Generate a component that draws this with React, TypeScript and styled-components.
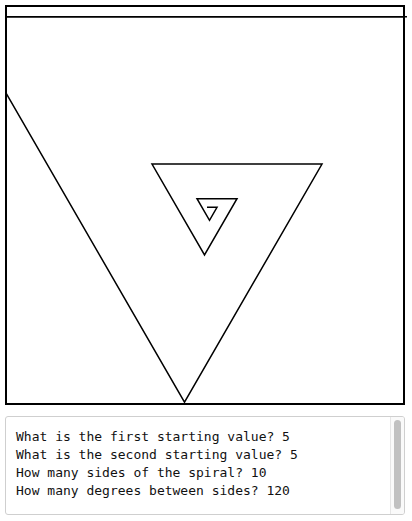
import React from "react";
import styled, { createGlobalStyle } from "styled-components";

const GlobalStyle = createGlobalStyle`
  html, body {
    margin: 0;
    padding: 0;
    background: #fff;
  }
`;

// turtle spiral: 10 sides, 720 down to 10, turning 120 each time
const lengths = [720, 445, 275, 170, 105, 65, 40, 25, 15, 10];
const spiralPoints = () => {
  let x = 682;
  let y = 16.8;
  let heading = 180;
  const pts: string[] = [`${x},${y}`];
  lengths.forEach((len) => {
    const rad = (heading * Math.PI) / 180;
    x += len * Math.cos(rad);
    y += len * Math.sin(rad);
    pts.push(`${x.toFixed(2)},${y.toFixed(2)}`);
    heading = (heading - 120 + 360) % 360;
  });
  return pts.join(" ");
};

const lines = [
  "What is the first starting value? 5",
  "What is the second starting value? 5",
  "How many sides of the spiral? 10",
  "How many degrees between sides? 120",
];

export default function App() {
  return (
    <Page>
      <GlobalStyle />
      <Canvas>
        <svg width="396" height="396" viewBox="7 7 396 396" overflow="visible">
          <defs>
            <clipPath id="area">
              <rect x="7" y="7" width="396" height="396" />
            </clipPath>
          </defs>
          <polyline
            points={spiralPoints()}
            fill="none"
            stroke="#000"
            strokeWidth="1.5"
            strokeLinejoin="miter"
            clipPath="url(#area)"
          />
          <line x1="7" y1="16.8" x2="407" y2="16.8" stroke="#000" strokeWidth="1.5" />
        </svg>
      </Canvas>
      <Console>
        <Output>
          {lines.map((l) => (
            <Line key={l}>{l}</Line>
          ))}
        </Output>
        <Rail>
          <Thumb />
        </Rail>
      </Console>
    </Page>
  );
}

const Page = styled.div`
  display: flex;
  flex-direction: column;
  gap: 11px;
  padding: 5px;
  width: 400px;
`;

const Canvas = styled.div`
  width: 400px;
  height: 400px;
  box-sizing: border-box;
  border: 2px solid #000;
  background: #fff;
  svg {
    display: block;
  }
`;

const Console = styled.div`
  display: flex;
  width: 400px;
  height: 99px;
  box-sizing: border-box;
  border: 1px solid #cfcfcf;
  border-radius: 3px;
  overflow: hidden;
  background: #fff;
`;

const Output = styled.div`
  flex: 1;
  padding: 11px 10px;
  font-family: "DejaVu Sans Mono", "Liberation Mono", monospace;
  font-size: 13px;
  line-height: 18px;
  color: #111;
`;

const Line = styled.div`
  white-space: pre;
`;

const Rail = styled.div`
  width: 14px;
  box-sizing: border-box;
  border-left: 1px solid #e6e6e6;
  background: #fafafa;
  padding: 3px 3px 5px 3px;
  display: flex;
`;

const Thumb = styled.div`
  flex: 1;
  border-radius: 4px;
  background: #c1c1c1;
`;
